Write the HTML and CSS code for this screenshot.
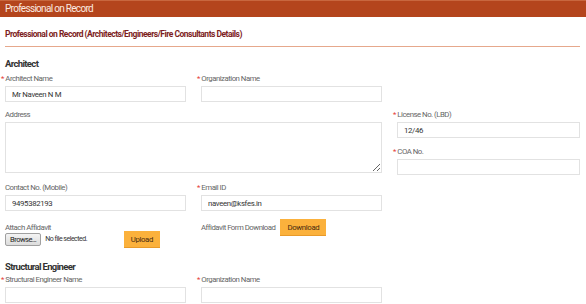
FILE: index.html
```html
<!DOCTYPE html>
<html lang="en">
<head>
    <meta charset="UTF-8">
    <title>Professional on Record</title>
    <link rel="stylesheet" href="styles.css">
</head>
<body>
    <div class="panel-head">Professional on Record</div>

    <div class="panel-body">
        <h2 class="sub-title">Professional on Record (Architects/Engineers/Fire Consultants Details)</h2>

        <!-- Architect -->
        <h3 class="group-title">Architect</h3>
        <div class="form-grid">
            <div class="field">
                <label class="req">Architect Name</label>
                <input type="text" value="Mr Naveen N M">
            </div>
            <div class="field">
                <label class="req">Organization Name</label>
                <input type="text">
            </div>
            <div></div>

            <div class="field span-2">
                <label>Address</label>
                <textarea></textarea>
            </div>
            <div class="stack">
                <div class="field">
                    <label class="req">License No. (LBD)</label>
                    <input type="text" value="12/46">
                </div>
                <div class="field">
                    <label class="req">COA No.</label>
                    <input type="text">
                </div>
            </div>

            <div class="field">
                <label>Contact No. (Mobile)</label>
                <input type="text" value="9495382193">
            </div>
            <div class="field">
                <label class="req">Email ID</label>
                <input type="text" value="naveen@ksfes.in">
            </div>
            <div></div>

            <div class="field affidavit">
                <label>Attach Affidavit</label>
                <div class="file-row">
                    <span class="browse">Browse...</span>
                    <span class="no-file">No file selected.</span>
                    <button class="btn-orange upload">Upload</button>
                </div>
            </div>
            <div class="download-row">
                <span class="dl-label">Affidavit Form Download</span>
                <button class="btn-orange">Download</button>
            </div>
            <div></div>
        </div>

        <!-- Structural Engineer -->
        <h3 class="group-title">Structural Engineer</h3>
        <div class="form-grid tight">
            <div class="field">
                <label class="req">Structural Engineer Name</label>
                <input type="text">
            </div>
            <div class="field">
                <label class="req">Organization Name</label>
                <input type="text">
            </div>
            <div></div>
        </div>
    </div>
</body>
</html>
```

FILE: styles.css
```css
/* professional on record form */

body {
    margin: 0;
    background: #fff;
    font-family: "Roboto", sans-serif;
    letter-spacing: -0.5px;
    color: #555;
}

.panel-head {
    height: 16px;
    padding-left: 5px;
    background: #b4451d;
    border-top: 1px solid #c8673f;
    color: #fbe9e0;
    font-size: 10px;
    letter-spacing: -0.7px;
    line-height: 16px;
}

.panel-body {
    padding: 0 6px 0 5px;
}

.sub-title {
    margin: 0;
    padding: 12px 0 7px;
    border-bottom: 1px solid #e6a88c;
    color: #7d1d1d;
    font-size: 8.5px;
    font-weight: bold;
    letter-spacing: -0.5px;
}

.group-title {
    margin: 0;
    padding-top: 11px;
    color: #333;
    font-size: 9.5px;
    font-weight: bold;
    letter-spacing: -0.65px;
    line-height: 12px;
}

/* grid */

.form-grid {
    display: grid;
    grid-template-columns: 181px 181px 1fr;
    column-gap: 15px;
    row-gap: 7px;
    padding-top: 3px;
}

.form-grid.tight {
    padding-top: 1px;
}

.span-2 {
    grid-column: span 2;
}

.stack {
    display: flex;
    flex-direction: column;
    gap: 8px;
}

.field label {
    display: block;
    height: 11px;
    margin-bottom: 2px;
    font-size: 7.8px;
    line-height: 11px;
    color: #666;
}

.req::before {
    content: "*";
    margin-left: -4px;
    margin-right: 1.5px;
    color: #e53935;
}

input,
textarea {
    display: block;
    box-sizing: border-box;
    width: 100%;
    height: 16px;
    margin: 0;
    padding: 0 6px;
    border: 1px solid #e2e2e2;
    font-family: inherit;
    font-size: 7.8px;
    letter-spacing: -0.35px;
    color: #333;
    outline: none;
}

textarea {
    height: 51px;
    resize: vertical;
}

/* affidavit */

.affidavit {
    margin-top: 4px;
    padding-bottom: 2px;
}

.file-row {
    display: flex;
    align-items: flex-start;
    margin-top: -2px;
}

.browse {
    height: 13px;
    padding: 0 4px;
    box-sizing: border-box;
    border: 1px solid #a0a0a0;
    border-radius: 2px;
    background: linear-gradient(#f4f4f4, #dcdcdc);
    font-size: 7.5px;
    line-height: 11px;
    color: #222;
}

.no-file {
    margin-left: 4px;
    font-size: 7px;
    line-height: 13px;
    color: #333;
}

.btn-orange {
    height: 17px;
    margin: 0;
    padding: 0 7px;
    border: none;
    border-bottom: 1px solid #e89a2a;
    background: #fbb13c;
    font-family: inherit;
    font-size: 7.8px;
    letter-spacing: -0.35px;
    color: #4a2c10;
}

.upload {
    margin: -2px 26px 0 auto;
}

.download-row {
    display: flex;
    align-items: center;
    align-self: start;
    gap: 5px;
    margin-top: 1px;
}

.dl-label {
    font-size: 7.8px;
    color: #666;
}
```
